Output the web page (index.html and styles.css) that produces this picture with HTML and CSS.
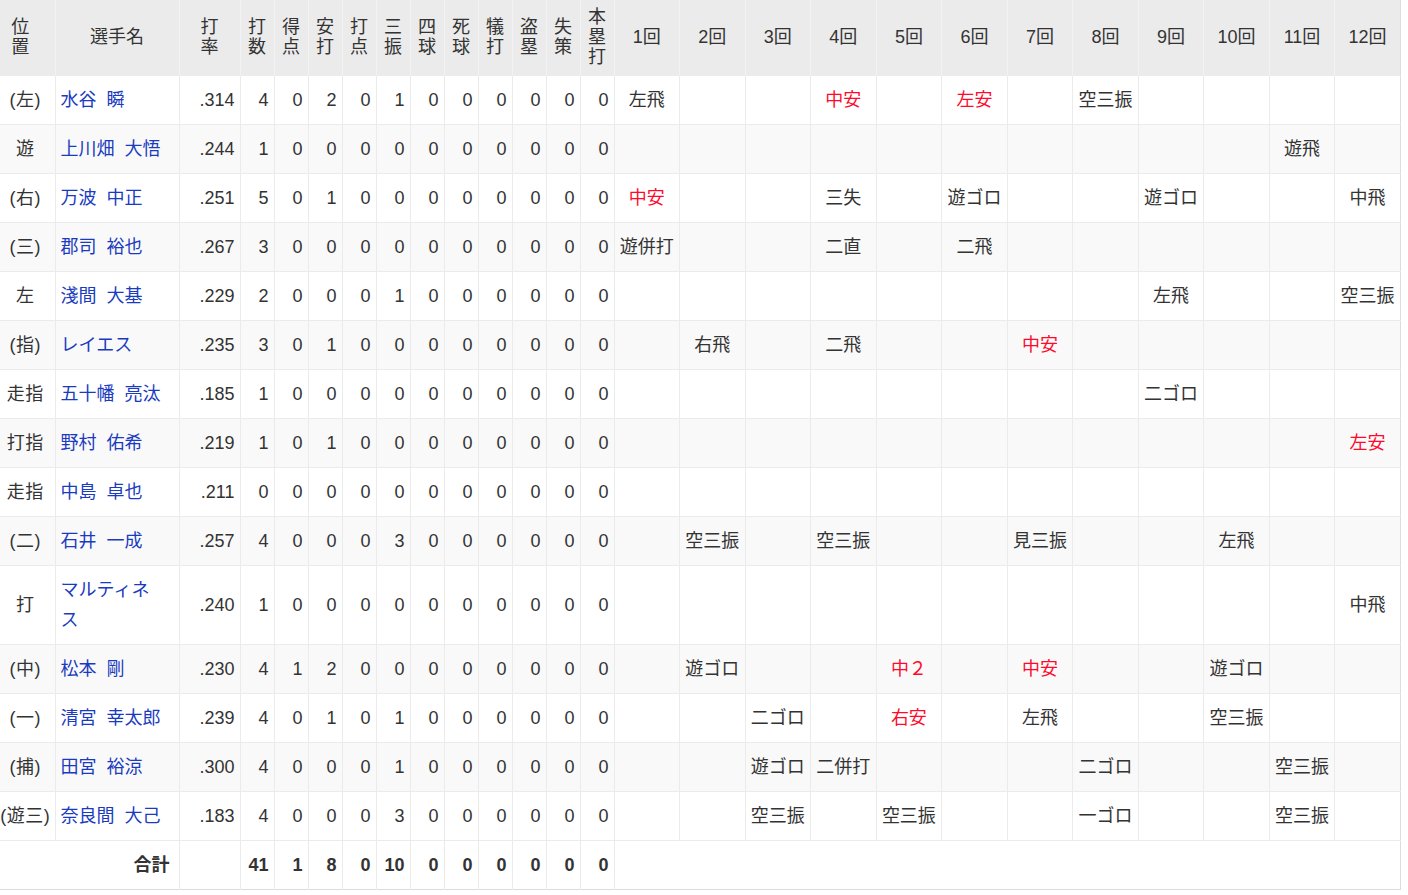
FILE: index.html
```html
<!DOCTYPE html>
<html lang="ja">
<head>
<meta charset="utf-8">
<title>打撃成績</title>
<link rel="stylesheet" href="styles.css">
</head>
<body>
<table class="score">
  <colgroup>
    <col class="c-pos"><col class="c-name"><col class="c-avg">
    <col class="c-st"><col class="c-st"><col class="c-st"><col class="c-st"><col class="c-st"><col class="c-st"><col class="c-st"><col class="c-st"><col class="c-st"><col class="c-st"><col class="c-st">
    <col class="c-inn"><col class="c-inn"><col class="c-inn"><col class="c-inn"><col class="c-inn"><col class="c-inn"><col class="c-inn"><col class="c-inn"><col class="c-inn"><col class="c-inn"><col class="c-inn"><col class="c-inn">
  </colgroup>
  <thead>
    <tr>
      <th class="h-pos">位<br>置</th><th>選手名</th><th>打<br>率</th>
      <th>打<br>数</th><th>得<br>点</th><th>安<br>打</th><th>打<br>点</th><th>三<br>振</th><th>四<br>球</th><th>死<br>球</th><th>犠<br>打</th><th>盗<br>塁</th><th>失<br>策</th><th>本<br>塁<br>打</th>
      <th>1回</th><th>2回</th><th>3回</th><th>4回</th><th>5回</th><th>6回</th><th>7回</th><th>8回</th><th>9回</th><th>10回</th><th>11回</th><th>12回</th>
    </tr>
  </thead>
  <tbody>
    <tr>
      <td class="pos">(左)</td><td class="name"><a href="#">水谷 瞬</a></td><td class="num">.314</td>
      <td class="num">4</td><td class="num">0</td><td class="num">2</td><td class="num">0</td><td class="num">1</td><td class="num">0</td><td class="num">0</td><td class="num">0</td><td class="num">0</td><td class="num">0</td><td class="num">0</td>
      <td class="inn">左飛</td><td class="inn"></td><td class="inn"></td><td class="inn hit">中安</td><td class="inn"></td><td class="inn hit">左安</td><td class="inn"></td><td class="inn">空三振</td><td class="inn"></td><td class="inn"></td><td class="inn"></td><td class="inn"></td>
    </tr>
    <tr>
      <td class="pos">遊</td><td class="name"><a href="#">上川畑 大悟</a></td><td class="num">.244</td>
      <td class="num">1</td><td class="num">0</td><td class="num">0</td><td class="num">0</td><td class="num">0</td><td class="num">0</td><td class="num">0</td><td class="num">0</td><td class="num">0</td><td class="num">0</td><td class="num">0</td>
      <td class="inn"></td><td class="inn"></td><td class="inn"></td><td class="inn"></td><td class="inn"></td><td class="inn"></td><td class="inn"></td><td class="inn"></td><td class="inn"></td><td class="inn"></td><td class="inn">遊飛</td><td class="inn"></td>
    </tr>
    <tr>
      <td class="pos">(右)</td><td class="name"><a href="#">万波 中正</a></td><td class="num">.251</td>
      <td class="num">5</td><td class="num">0</td><td class="num">1</td><td class="num">0</td><td class="num">0</td><td class="num">0</td><td class="num">0</td><td class="num">0</td><td class="num">0</td><td class="num">0</td><td class="num">0</td>
      <td class="inn hit">中安</td><td class="inn"></td><td class="inn"></td><td class="inn">三失</td><td class="inn"></td><td class="inn">遊ゴロ</td><td class="inn"></td><td class="inn"></td><td class="inn">遊ゴロ</td><td class="inn"></td><td class="inn"></td><td class="inn">中飛</td>
    </tr>
    <tr>
      <td class="pos">(三)</td><td class="name"><a href="#">郡司 裕也</a></td><td class="num">.267</td>
      <td class="num">3</td><td class="num">0</td><td class="num">0</td><td class="num">0</td><td class="num">0</td><td class="num">0</td><td class="num">0</td><td class="num">0</td><td class="num">0</td><td class="num">0</td><td class="num">0</td>
      <td class="inn">遊併打</td><td class="inn"></td><td class="inn"></td><td class="inn">二直</td><td class="inn"></td><td class="inn">二飛</td><td class="inn"></td><td class="inn"></td><td class="inn"></td><td class="inn"></td><td class="inn"></td><td class="inn"></td>
    </tr>
    <tr>
      <td class="pos">左</td><td class="name"><a href="#">淺間 大基</a></td><td class="num">.229</td>
      <td class="num">2</td><td class="num">0</td><td class="num">0</td><td class="num">0</td><td class="num">1</td><td class="num">0</td><td class="num">0</td><td class="num">0</td><td class="num">0</td><td class="num">0</td><td class="num">0</td>
      <td class="inn"></td><td class="inn"></td><td class="inn"></td><td class="inn"></td><td class="inn"></td><td class="inn"></td><td class="inn"></td><td class="inn"></td><td class="inn">左飛</td><td class="inn"></td><td class="inn"></td><td class="inn">空三振</td>
    </tr>
    <tr>
      <td class="pos">(指)</td><td class="name"><a href="#">レイエス</a></td><td class="num">.235</td>
      <td class="num">3</td><td class="num">0</td><td class="num">1</td><td class="num">0</td><td class="num">0</td><td class="num">0</td><td class="num">0</td><td class="num">0</td><td class="num">0</td><td class="num">0</td><td class="num">0</td>
      <td class="inn"></td><td class="inn">右飛</td><td class="inn"></td><td class="inn">二飛</td><td class="inn"></td><td class="inn"></td><td class="inn hit">中安</td><td class="inn"></td><td class="inn"></td><td class="inn"></td><td class="inn"></td><td class="inn"></td>
    </tr>
    <tr>
      <td class="pos">走指</td><td class="name"><a href="#">五十幡 亮汰</a></td><td class="num">.185</td>
      <td class="num">1</td><td class="num">0</td><td class="num">0</td><td class="num">0</td><td class="num">0</td><td class="num">0</td><td class="num">0</td><td class="num">0</td><td class="num">0</td><td class="num">0</td><td class="num">0</td>
      <td class="inn"></td><td class="inn"></td><td class="inn"></td><td class="inn"></td><td class="inn"></td><td class="inn"></td><td class="inn"></td><td class="inn"></td><td class="inn">二ゴロ</td><td class="inn"></td><td class="inn"></td><td class="inn"></td>
    </tr>
    <tr>
      <td class="pos">打指</td><td class="name"><a href="#">野村 佑希</a></td><td class="num">.219</td>
      <td class="num">1</td><td class="num">0</td><td class="num">1</td><td class="num">0</td><td class="num">0</td><td class="num">0</td><td class="num">0</td><td class="num">0</td><td class="num">0</td><td class="num">0</td><td class="num">0</td>
      <td class="inn"></td><td class="inn"></td><td class="inn"></td><td class="inn"></td><td class="inn"></td><td class="inn"></td><td class="inn"></td><td class="inn"></td><td class="inn"></td><td class="inn"></td><td class="inn"></td><td class="inn hit">左安</td>
    </tr>
    <tr>
      <td class="pos">走指</td><td class="name"><a href="#">中島 卓也</a></td><td class="num">.211</td>
      <td class="num">0</td><td class="num">0</td><td class="num">0</td><td class="num">0</td><td class="num">0</td><td class="num">0</td><td class="num">0</td><td class="num">0</td><td class="num">0</td><td class="num">0</td><td class="num">0</td>
      <td class="inn"></td><td class="inn"></td><td class="inn"></td><td class="inn"></td><td class="inn"></td><td class="inn"></td><td class="inn"></td><td class="inn"></td><td class="inn"></td><td class="inn"></td><td class="inn"></td><td class="inn"></td>
    </tr>
    <tr>
      <td class="pos">(二)</td><td class="name"><a href="#">石井 一成</a></td><td class="num">.257</td>
      <td class="num">4</td><td class="num">0</td><td class="num">0</td><td class="num">0</td><td class="num">3</td><td class="num">0</td><td class="num">0</td><td class="num">0</td><td class="num">0</td><td class="num">0</td><td class="num">0</td>
      <td class="inn"></td><td class="inn">空三振</td><td class="inn"></td><td class="inn">空三振</td><td class="inn"></td><td class="inn"></td><td class="inn">見三振</td><td class="inn"></td><td class="inn"></td><td class="inn">左飛</td><td class="inn"></td><td class="inn"></td>
    </tr>
    <tr>
      <td class="pos">打</td><td class="name"><a href="#">マルティネス</a></td><td class="num">.240</td>
      <td class="num">1</td><td class="num">0</td><td class="num">0</td><td class="num">0</td><td class="num">0</td><td class="num">0</td><td class="num">0</td><td class="num">0</td><td class="num">0</td><td class="num">0</td><td class="num">0</td>
      <td class="inn"></td><td class="inn"></td><td class="inn"></td><td class="inn"></td><td class="inn"></td><td class="inn"></td><td class="inn"></td><td class="inn"></td><td class="inn"></td><td class="inn"></td><td class="inn"></td><td class="inn">中飛</td>
    </tr>
    <tr>
      <td class="pos">(中)</td><td class="name"><a href="#">松本 剛</a></td><td class="num">.230</td>
      <td class="num">4</td><td class="num">1</td><td class="num">2</td><td class="num">0</td><td class="num">0</td><td class="num">0</td><td class="num">0</td><td class="num">0</td><td class="num">0</td><td class="num">0</td><td class="num">0</td>
      <td class="inn"></td><td class="inn">遊ゴロ</td><td class="inn"></td><td class="inn"></td><td class="inn hit">中２</td><td class="inn"></td><td class="inn hit">中安</td><td class="inn"></td><td class="inn"></td><td class="inn">遊ゴロ</td><td class="inn"></td><td class="inn"></td>
    </tr>
    <tr>
      <td class="pos">(一)</td><td class="name"><a href="#">清宮 幸太郎</a></td><td class="num">.239</td>
      <td class="num">4</td><td class="num">0</td><td class="num">1</td><td class="num">0</td><td class="num">1</td><td class="num">0</td><td class="num">0</td><td class="num">0</td><td class="num">0</td><td class="num">0</td><td class="num">0</td>
      <td class="inn"></td><td class="inn"></td><td class="inn">二ゴロ</td><td class="inn"></td><td class="inn hit">右安</td><td class="inn"></td><td class="inn">左飛</td><td class="inn"></td><td class="inn"></td><td class="inn">空三振</td><td class="inn"></td><td class="inn"></td>
    </tr>
    <tr>
      <td class="pos">(捕)</td><td class="name"><a href="#">田宮 裕涼</a></td><td class="num">.300</td>
      <td class="num">4</td><td class="num">0</td><td class="num">0</td><td class="num">0</td><td class="num">1</td><td class="num">0</td><td class="num">0</td><td class="num">0</td><td class="num">0</td><td class="num">0</td><td class="num">0</td>
      <td class="inn"></td><td class="inn"></td><td class="inn">遊ゴロ</td><td class="inn">二併打</td><td class="inn"></td><td class="inn"></td><td class="inn"></td><td class="inn">二ゴロ</td><td class="inn"></td><td class="inn"></td><td class="inn">空三振</td><td class="inn"></td>
    </tr>
    <tr>
      <td class="pos">(遊三)</td><td class="name"><a href="#">奈良間 大己</a></td><td class="num">.183</td>
      <td class="num">4</td><td class="num">0</td><td class="num">0</td><td class="num">0</td><td class="num">3</td><td class="num">0</td><td class="num">0</td><td class="num">0</td><td class="num">0</td><td class="num">0</td><td class="num">0</td>
      <td class="inn"></td><td class="inn"></td><td class="inn">空三振</td><td class="inn"></td><td class="inn">空三振</td><td class="inn"></td><td class="inn"></td><td class="inn">一ゴロ</td><td class="inn"></td><td class="inn"></td><td class="inn">空三振</td><td class="inn"></td>
    </tr>
    <tr class="total">
      <td class="total-label" colspan="2">合計</td><td class="num"></td>
      <td class="num">41</td><td class="num">1</td><td class="num">8</td><td class="num">0</td><td class="num">10</td><td class="num">0</td><td class="num">0</td><td class="num">0</td><td class="num">0</td><td class="num">0</td><td class="num">0</td>
      <td class="inn" colspan="12"></td>
    </tr>
  </tbody>
</table>
</body>
</html>
```

FILE: styles.css
```css
html, body {
  margin: 0;
  padding: 0;
  background: #fff;
}

body {
  font-family: "Liberation Sans", "Noto Sans CJK JP", sans-serif;
  font-size: 18px;
  color: #333;
}

.score {
  border-collapse: collapse;
  table-layout: fixed;
  width: 1401px;
  border-right: 1px solid #dcdcdc;
  border-bottom: 1px solid #dcdcdc;
}

.c-pos { width: 55px; }
.c-name { width: 124px; }
.c-avg { width: 61px; }
.c-st { width: 34px; }
.c-inn { width: 65.5px; }

.score th {
  background: #ebebeb;
  font-weight: normal;
  line-height: 20px;
  padding: 7px 0 8px;
  height: 60px;
  text-align: center;
  vertical-align: middle;
  border-left: 1px solid #f2f2f2;
  border-bottom: 1px solid #ebebeb;
  color: #333;
}

.score th.h-pos {
  padding-right: 14px;
  border-left: none;
}

.score td {
  line-height: 30px;
  padding: 9px 5px;
  border-left: 1px solid #ebebeb;
  border-top: 1px solid #ebebeb;
  vertical-align: middle;
  white-space: normal;
}

.score td:first-child {
  border-left: none;
}

.score tbody tr:nth-child(even) td {
  background: #f9f9f9;
}

.score td.pos {
  text-align: center;
  padding: 9px 4px 9px 0;
  white-space: nowrap;
  letter-spacing: 0.5px;
}

.score td.name {
  padding-left: 5px;
  padding-right: 14px;
  word-spacing: 5px;
}

.score td.name a {
  color: #1a3bbf;
  text-decoration: none;
}

.score td.num {
  text-align: right;
  padding-right: 5px;
  padding-left: 0;
}

.score td.inn {
  text-align: center;
  padding-left: 0;
  padding-right: 0;
}

.score td.hit {
  color: #ff0a2c;
}

.score tbody tr.total td {
  font-weight: bold;
  background: #fff;
}

.score td.total-label {
  text-align: right;
  padding-right: 9px;
}
```
